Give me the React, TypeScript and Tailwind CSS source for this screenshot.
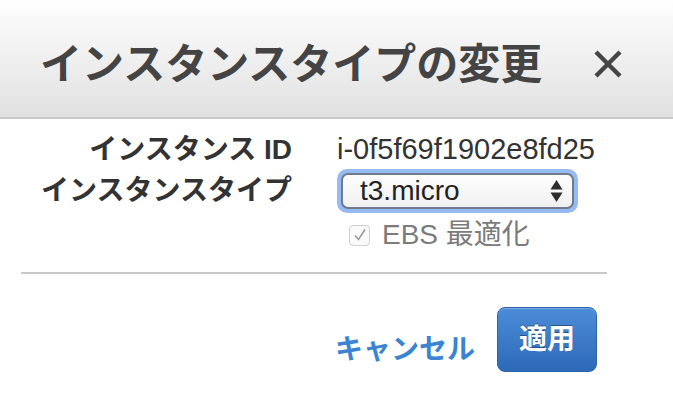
const font = { fontFamily: '"Liberation Sans", "Noto Sans CJK JP", sans-serif' }

function CloseIcon() {
  return (
    <svg width="30" height="30" viewBox="0 0 30 30" className="blur-[0.4px]">
      <path d="M3 3L27 27M27 3L3 27" stroke="#454545" strokeWidth="4.4" strokeLinecap="butt" />
    </svg>
  )
}

function SelectArrows() {
  return (
    <svg width="13" height="24" viewBox="0 0 13 24">
      <path d="M6.5 1L12.5 10.5H0.5Z" fill="#2c2c2c" />
      <path d="M6.5 23L12.5 13.5H0.5Z" fill="#2c2c2c" />
    </svg>
  )
}

export default function App() {
  return (
    <div className="w-[673px] h-[411px] bg-white overflow-hidden text-[#444]" style={font}>
      {/* Header */}
      <div className="h-[119px] flex items-center border-b-2 border-[#c9c9c9] bg-gradient-to-b from-[#fefefe] to-[#e1e1e1] pl-[40px] pr-[50px]">
        <h1 className="text-[42px] font-bold leading-none mt-[4px] text-[#444]" style={{ fontFamily: '"Noto Sans CJK JP", sans-serif' }}>
          インスタンスタイプの変更
        </h1>
        <div className="ml-auto mt-[10px]">
          <CloseIcon />
        </div>
      </div>

      {/* Body */}
      <div className="pt-[12px] grid grid-cols-[292px_1fr] gap-x-[45px]">
        <div className="h-[38px] flex items-center justify-end text-[28px] font-bold text-[#333]">
          インスタンス ID
        </div>
        <div className="h-[38px] flex items-center text-[29px] text-[#333]">
          i-0f5f69f1902e8fd25
        </div>

        <div className="h-[44px] flex items-center justify-end text-[28px] font-bold text-[#333]">
          インスタンスタイプ
        </div>
        <div className="h-[44px] flex items-center">
          <div className="w-[241px] h-[44px] p-[4px] rounded-[10px] bg-[#96bbf2]">
            <div className="h-full flex items-center justify-between rounded-[7px] border-2 border-[#6f7b8c] bg-gradient-to-b from-[#fdfdfd] to-[#f1f1f1] pl-[17px] pr-[9px]">
              <span className="text-[28px] text-[#222] leading-none">t3.micro</span>
              <SelectArrows />
            </div>
          </div>
        </div>

        <div className="h-[44px]" />
        <div className="h-[44px] flex items-center gap-[12px] pl-[12px]">
          <div className="w-[21px] h-[21px] rounded-[4px] border border-[#cfcfcf] bg-[#fafafa] flex items-center justify-center">
            <svg width="14" height="14" viewBox="0 0 14 14">
              <path d="M2 7.5L5.5 11.5L12 1.5" stroke="#9a9a9a" strokeWidth="1.6" fill="none" />
            </svg>
          </div>
          <span className="text-[28px] text-[#7b7b7b] leading-none">EBS 最適化</span>
        </div>
      </div>

      {/* Divider */}
      <div className="mt-[15px] ml-[21px] w-[586px] h-[2px] bg-[#c9c9c9]" />

      {/* Footer */}
      <div className="mt-[33px] flex items-center justify-end gap-[22px] pr-[76px]">
        <span className="text-[28px] font-bold text-[#3b84d2] mt-[20px]">キャンセル</span>
        <button className="w-[100px] h-[65px] rounded-[8px] border border-[#2d62ad] bg-gradient-to-b from-[#4b8cd8] to-[#2e69b8] text-white text-[28px] font-bold [text-shadow:0_-1px_0_rgba(0,0,0,0.35)] shadow-[inset_0_1px_0_rgba(255,255,255,0.25)]">
          適用
        </button>
      </div>
    </div>
  )
}
